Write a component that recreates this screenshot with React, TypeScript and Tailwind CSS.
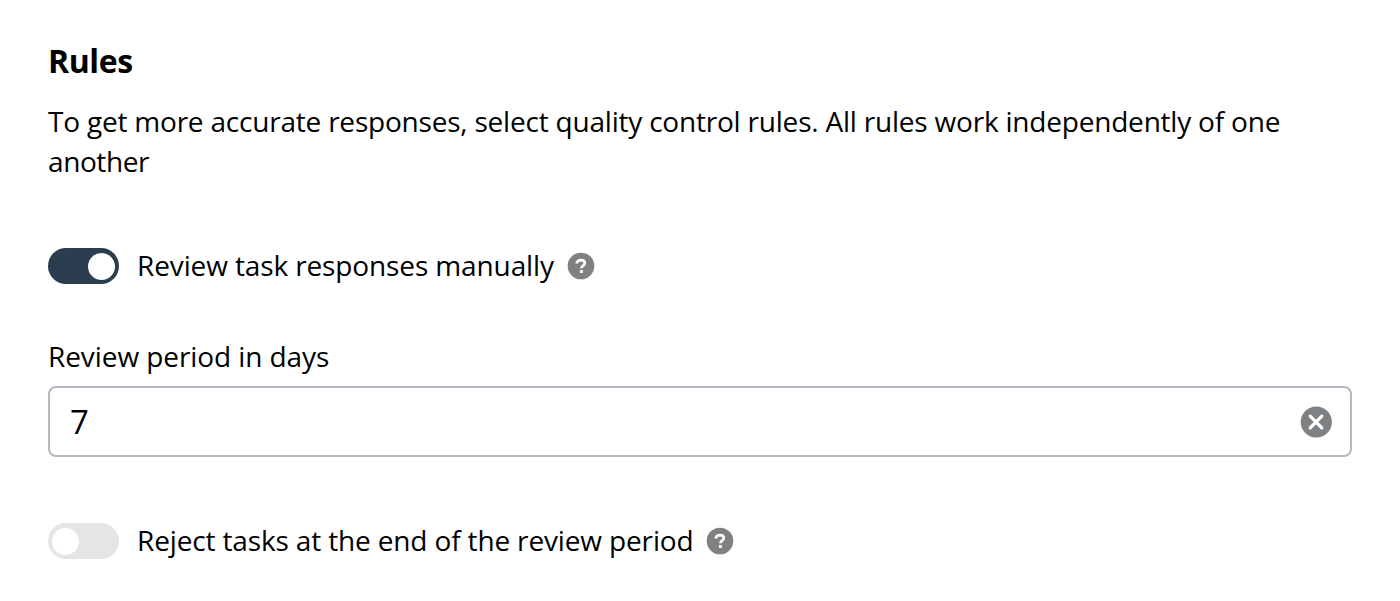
import React, { useState } from "react";

function Toggle({ on, onChange, label }: { on: boolean; onChange: () => void; label: string }) {
  return (
    <button
      type="button"
      role="switch"
      aria-checked={on}
      aria-label={label}
      onClick={onChange}
      className={`flex h-9 w-[71px] shrink-0 items-center rounded-full pr-[4.5px] pl-1 ${on ? "justify-end bg-[#2c3d4f]" : "justify-start bg-[#e5e5e5]"}`}
    >
      <span className="size-[27px] rounded-full bg-white" />
    </button>
  );
}

function Help() {
  return (
    <svg viewBox="0 0 28 28" className="block size-7">
      <circle cx="14" cy="14" r="13.3" fill="#808080" />
      <path d="M9.8 11.5C10 9.2 11.7 8.1 14 8.1C16.3 8.1 17.8 9.3 17.8 11.1C17.8 13.7 14.4 13.5 14.4 16.3" fill="none" stroke="white" strokeWidth="2.7" />
      <rect x="12.9" y="18.1" width="3" height="3" rx="0.6" fill="white" />
    </svg>
  );
}

export default function App() {
  const [manual, setManual] = useState(true);
  const [reject, setReject] = useState(false);
  const [days, setDays] = useState("7");

  return (
    <main className="h-[601px] bg-white px-12 pt-[41px] font-['Open_Sans',sans-serif] text-[28px] text-black">
      <h1 className="text-[32px] leading-10 font-bold tracking-[-0.4px]">Rules</h1>
      <p className="mt-5 leading-10 tracking-[-0.206px]">
        To get more accurate responses, select quality control rules. All rules work independently of one{" "}
        <span className="tracking-[-0.4px]">another</span>
      </p>
      <div className="mt-[67px] flex h-9 items-center">
        <Toggle on={manual} onChange={() => setManual(!manual)} label="Review task responses manually" />
        <span className="ml-[18px] w-[418px] pb-0.5 leading-9 tracking-[-0.12px] whitespace-nowrap">Review task responses manually</span>
        <span className="ml-3"><Help /></span>
      </div>
      <label htmlFor="days" className="mt-[52px] block h-[50px] leading-10 tracking-[-0.08px]">Review period in days</label>
      <div className="flex h-[71px] items-center rounded-lg border-2 border-[#b3bac2] pr-[18px] pl-5">
        <input
          id="days"
          value={days}
          onChange={(e) => setDays(e.target.value)}
          className="min-w-0 flex-1 bg-transparent text-[33px] leading-[44px] outline-none"
        />
        <button type="button" aria-label="Clear" onClick={() => setDays("")}>
          <svg viewBox="0 0 32 32" className="block size-8">
            <circle cx="16.3" cy="16" r="15.6" fill="#7f8285" />
            <path d="M10.2 10.2L21.8 21.8M21.8 10.2L10.2 21.8" stroke="white" strokeWidth="3.2" strokeLinecap="round" />
          </svg>
        </button>
      </div>
      <div className="mt-[66px] flex h-9 items-center">
        <Toggle on={reject} onChange={() => setReject(!reject)} label="Reject tasks at the end of the review period" />
        <span className="ml-[18px] w-[557px] pb-0.5 leading-9 tracking-[-0.145px] whitespace-nowrap">Reject tasks at the end of the review period</span>
        <span className="ml-3"><Help /></span>
      </div>
    </main>
  );
}
